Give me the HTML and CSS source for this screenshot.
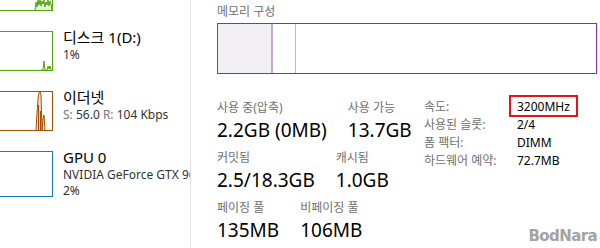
FILE: index.html
```html
<!DOCTYPE html>
<html lang="ko">
<head>
  <meta charset="UTF-8" />
  <meta name="viewport" content="width=device-width, initial-scale=1.0" />
  <title>작업 관리자 - 메모리</title>
  <link rel="stylesheet" href="styles.css">
</head>
<body>

  <div class="window">
    <aside class="sidebar">
      <div class="item">
        <svg class="graph disk" width="53" height="40" viewBox="0 0 53 40">
          <polygon class="fill" points="35,39.5 36,31 37,36 38,29 39,34 40,28 41,35 42,30 43,33 44,29 45,36 46,31 47,34 48,29 49,35 50,30 51,33 52,39.5" />
          <rect x="-3" y="0.5" width="55.5" height="39" />
        </svg>
      </div>

      <div class="item">
        <svg class="graph disk" width="53" height="40" viewBox="0 0 53 40">
          <polyline class="line" points="41,39 43,39 44,30 45,39 47,39 48,35 49,38 50,35 51,39" />
          <rect x="-3" y="0.5" width="55.5" height="39" />
        </svg>
        <div class="info">
          <div class="name">디스크 1(D:)</div>
          <div class="sub">1%</div>
        </div>
      </div>

      <div class="item">
        <svg class="graph net" width="53" height="40" viewBox="0 0 53 40">
          <polygon class="fill" points="36,39.5 37,22 38,8 39,2 40,0.5 41,4 42,39 43,28 44,24 45,39.5" />
          <polyline class="line" points="36,39 37,22 38,8 39,2 40,0.5 41,4 42,39 43,28 44,24 45,39" />
          <line class="line" x1="38.5" y1="39" x2="38.5" y2="14" />
          <line class="line" x1="40.5" y1="39" x2="40.5" y2="20" />
          <rect x="-3" y="0.5" width="55.5" height="39" />
        </svg>
        <div class="info">
          <div class="name">이더넷</div>
          <div class="sub"><span class="dim">S:</span> 56.0 <span class="dim">R:</span> 104 Kbps</div>
        </div>
      </div>

      <div class="item">
        <svg class="graph gpu" width="53" height="46" viewBox="0 0 53 46">
          <rect x="-3" y="0.5" width="55.5" height="45" />
        </svg>
        <div class="info">
          <div class="name">GPU 0</div>
          <div class="sub">NVIDIA GeForce GTX 960</div>
          <div class="sub">2%</div>
        </div>
      </div>
    </aside>

    <main class="detail">
      <div class="caption">메모리 구성</div>
      <div class="mem-bar">
        <div class="seg used"></div>
        <div class="seg modified"></div>
        <div class="seg rest"></div>
      </div>

      <div class="stats">
        <div class="stat-grid">
          <div class="stat-row">
            <div class="stat">
              <div class="label">사용 중(압축)</div>
              <div class="value">2.2GB (0MB)</div>
            </div>
            <div class="stat">
              <div class="label">사용 가능</div>
              <div class="value">13.7GB</div>
            </div>
          </div>
          <div class="stat-row">
            <div class="stat">
              <div class="label">커밋됨</div>
              <div class="value">2.5/18.3GB</div>
            </div>
            <div class="stat">
              <div class="label">캐시됨</div>
              <div class="value">1.0GB</div>
            </div>
          </div>
          <div class="stat-row">
            <div class="stat">
              <div class="label">페이징 풀</div>
              <div class="value">135MB</div>
            </div>
            <div class="stat">
              <div class="label">비페이징 풀</div>
              <div class="value">106MB</div>
            </div>
          </div>
        </div>

        <dl class="props">
          <dt>속도:</dt>
          <dd><span class="mark">3200MHz</span></dd>
          <dt>사용된 슬롯:</dt>
          <dd>2/4</dd>
          <dt>폼 팩터:</dt>
          <dd>DIMM</dd>
          <dt>하드웨어 예약:</dt>
          <dd>72.7MB</dd>
        </dl>
      </div>
    </main>

    <div class="watermark">BodNara</div>
  </div>

</body>
</html>
```

FILE: styles.css
```css
body {
  font-family: 'Noto Sans', 'Noto Sans CJK KR', sans-serif;
  background-color: #fff;
  margin: 0;
  padding: 0;
  overflow: hidden;
}
.window {
  position: relative;
  display: flex;
  height: 248px;
  overflow: hidden;
}

/* left list (scrolled) */
.sidebar {
  flex: none;
  width: 190px;
  margin-top: -33px;
  border-right: 1px solid #e4e4e4;
  overflow: hidden;
}
.item {
  display: flex;
  gap: 10px;
  height: 60px;
}
.graph {
  flex: none;
  margin-top: 4px;
}
.graph rect {
  fill: none;
  stroke-width: 1;
}
.graph .line {
  fill: none;
  stroke-width: 1;
}
.graph.disk rect, .graph.disk .line, .graph.disk .fill {
  stroke: #4da60c;
}
.graph.disk .fill {
  fill: #e6f2da;
}
.graph.net rect, .graph.net .line {
  stroke: #a74f01;
}
.graph.net .fill {
  fill: #f3e5d6;
  stroke: none;
}
.graph.gpu rect {
  stroke: #1b7ab9;
}
.info {
  white-space: nowrap;
}
.name {
  font-size: 15px;
  line-height: 20px;
  color: #000;
}
.sub {
  font-size: 12px;
  line-height: 16px;
  color: #333;
}
.dim {
  color: #777;
}

/* memory detail */
.detail {
  flex: 1;
  padding: 4px 3px 0 26px;
}
.caption {
  font-size: 12px;
  line-height: 16px;
  color: #707070;
  margin-bottom: 3px;
}
.mem-bar {
  display: flex;
  height: 49px;
  border: 1px solid #8d2bae;
}
.seg.used {
  width: 53px;
  background-color: #f1eff4;
  border-right: 2px solid #c8a6d6;
}
.seg.modified {
  width: 22px;
  border-right: 1px solid #ccb0d9;
}
.seg.rest {
  flex: 1;
}
.stats {
  display: flex;
  margin-top: 25px;
}
.stat-grid {
  flex: none;
  width: 207px;
}
.stat-row {
  display: flex;
  gap: 21px;
  margin-bottom: 6px;
}
.label {
  font-size: 12px;
  line-height: 18px;
  color: #707070;
}
.value {
  font-size: 19px;
  line-height: 26px;
  color: #000;
}
.props {
  display: grid;
  grid-template-columns: 93px auto;
  align-content: start;
  margin: -1px 0 0;
  font-size: 12px;
  line-height: 18px;
}
.props dt {
  color: #707070;
}
.props dd {
  margin: 0;
  color: #000;
}
.mark {
  position: relative;
  display: inline-block;
}
.mark::after {
  content: "";
  position: absolute;
  left: -8px;
  right: -8px;
  top: -3px;
  bottom: -1px;
  border: 2px solid #e3121b;
}

.watermark {
  position: absolute;
  right: 3px;
  bottom: 3px;
  font-family: 'DejaVu Sans', sans-serif;
  font-weight: bold;
  font-size: 15px;
  letter-spacing: -0.6px;
  color: #a3a3a3;
}
```
